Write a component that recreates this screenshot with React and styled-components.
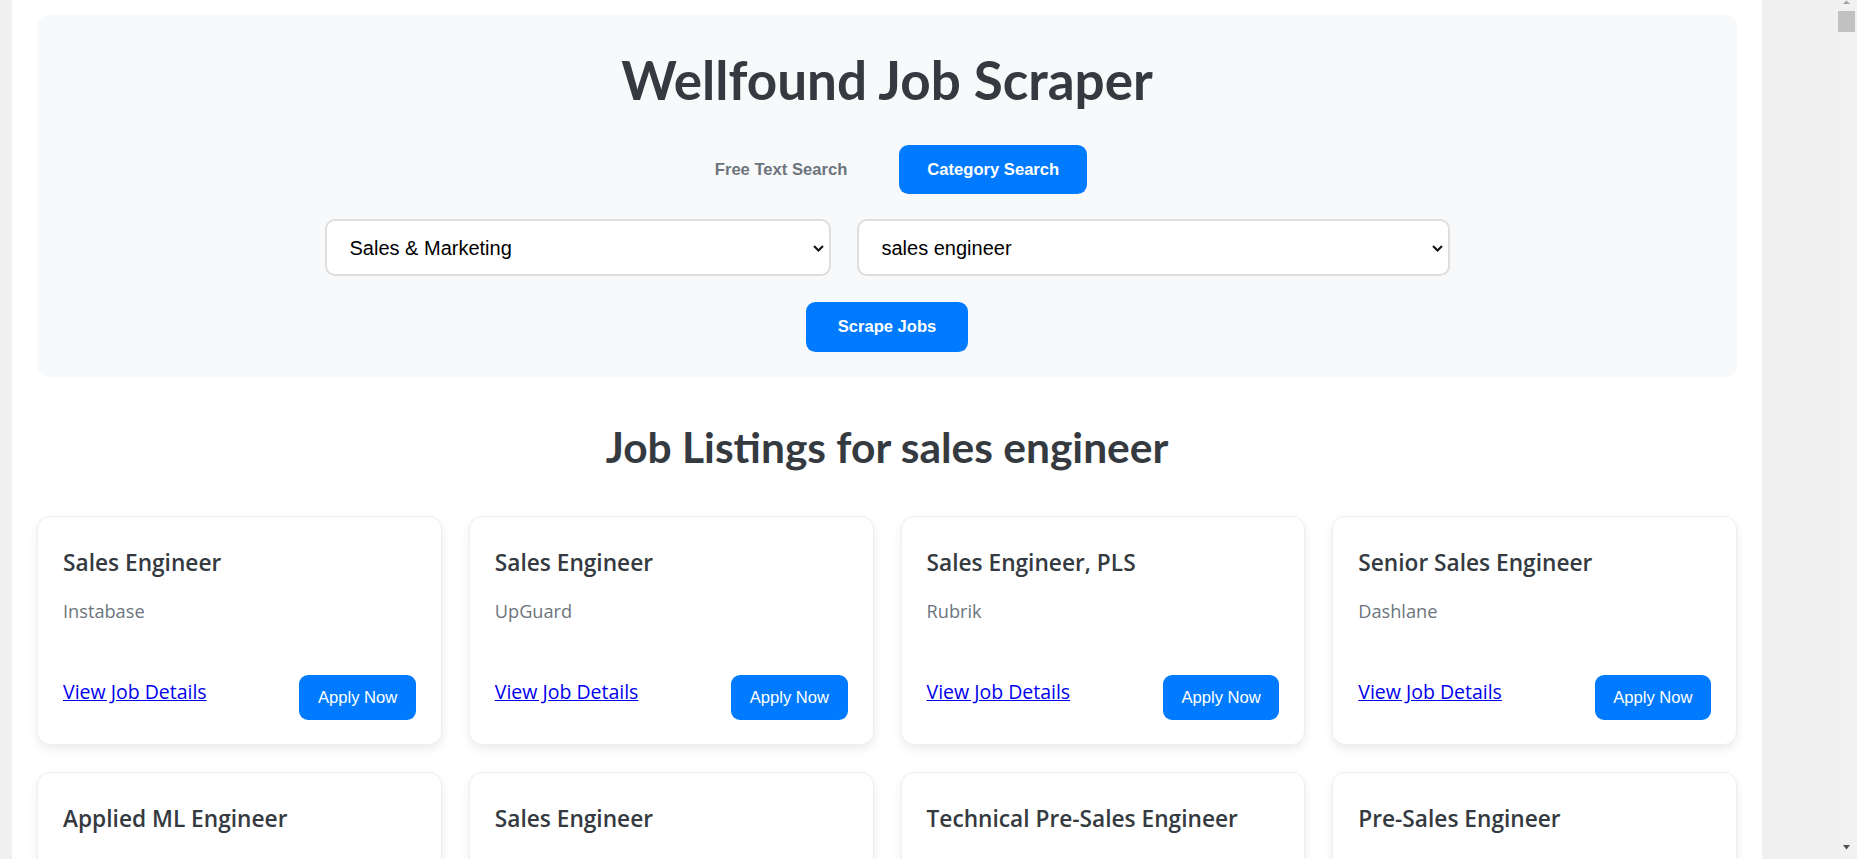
import React from 'react';
import styled, { createGlobalStyle } from 'styled-components';

const GlobalStyle = createGlobalStyle`
  html, body {
    margin: 0;
    padding: 0;
    height: 100%;
    overflow: hidden;
  }
  body {
    background: #f0f0f0;
    font-family: "Open Sans", "Noto Sans", sans-serif;
  }
  * {
    box-sizing: border-box;
  }
`;

const Frame = styled.div`
  display: flex;
  height: 100vh;
`;

const Page = styled.div`
  flex: 1;
  overflow: hidden;
  padding-left: 12px;
  background: #f0f0f0;
`;

const Container = styled.main`
  width: 1750px;
  min-height: 100%;
  background: #fff;
  padding: 15px 25px 0;
`;

const SearchPanel = styled.section`
  background: #f8f9fa;
  border-radius: 12px;
  padding: 25px;
  display: flex;
  flex-direction: column;
  align-items: center;
`;

const Title = styled.h1`
  margin: 14px 0 0;
  font-family: Lato, "Open Sans", sans-serif;
  font-size: 53px;
  line-height: 52px;
  font-weight: 700;
  color: #343a40;
`;

const Tabs = styled.div`
  display: flex;
  gap: 24px;
  margin-top: 39px;
`;

const Tab = styled.button`
  height: 49px;
  padding: 0 28px;
  border: none;
  border-radius: 9.5px;
  font-family: "Liberation Sans", Arial, sans-serif;
  font-size: 16.6px;
  font-weight: 700;
  cursor: pointer;
  background: ${p => (p.$active ? '#007bff' : 'transparent')};
  color: ${p => (p.$active ? '#fff' : '#6c757d')};
`;

const SelectRow = styled.div`
  display: flex;
  gap: 26px;
  margin-top: 25px;
`;

const SelectWrap = styled.div`
  position: relative;
  width: ${p => p.$width}px;
`;

const Select = styled.select`
  appearance: none;
  width: 100%;
  height: 57px;
  padding: 0 40px 0 23px;
  border: 2px solid #dedede;
  border-radius: 10px;
  background: #fff;
  color: #000;
  font-family: "Liberation Sans", Arial, sans-serif;
  font-size: 20px;
  outline: none;
`;

const Chevron = styled.svg`
  position: absolute;
  right: 7px;
  top: 50%;
  margin-top: -3px;
  pointer-events: none;
`;

const PrimaryButton = styled.button`
  height: 50px;
  padding: 0 32px;
  margin-top: 26px;
  border: none;
  border-radius: 9.5px;
  background: #007bff;
  color: #fff;
  font-family: "Liberation Sans", Arial, sans-serif;
  font-size: 16.6px;
  font-weight: 700;
  cursor: pointer;
`;

const SectionTitle = styled.h2`
  margin: 49px 0 48px;
  text-align: center;
  font-family: Lato, "Open Sans", sans-serif;
  font-size: 42.5px;
  line-height: 42px;
  font-weight: 700;
  color: #343a40;
`;

const Grid = styled.div`
  display: grid;
  grid-template-columns: repeat(4, 1fr);
  gap: 27px;
`;

const Card = styled.article`
  display: flex;
  flex-direction: column;
  padding: 25px 25px 24px;
  background: #fff;
  border: 1px solid #eceef0;
  border-radius: 13px;
  box-shadow: 0 4px 10px rgba(0, 0, 0, 0.08);
`;

const JobTitle = styled.h3`
  margin: 6px 0 0;
  font-size: 22.7px;
  line-height: 30px;
  font-weight: 600;
  color: #343a40;
`;

const Company = styled.p`
  margin: 20px 0 0;
  font-size: 18.2px;
  line-height: 26px;
  color: #6c757d;
`;

const CardFooter = styled.div`
  display: flex;
  justify-content: space-between;
  align-items: flex-start;
  margin-top: 51px;
`;

const DetailsLink = styled.a`
  margin-top: 4px;
  font-size: 19.5px;
  line-height: 26px;
  color: #0000ee;
  text-decoration: underline;
`;

const ApplyButton = styled.button`
  height: 45px;
  padding: 0 18.5px;
  border: none;
  border-radius: 9px;
  background: #007bff;
  color: #fff;
  font-family: "Liberation Sans", Arial, sans-serif;
  font-size: 16.6px;
  cursor: pointer;
`;

const ScrollRail = styled.div`
  width: 21px;
  background: #f1f1f1;
  display: flex;
  flex-direction: column;
  align-items: center;
`;

const Thumb = styled.div`
  width: 17px;
  height: 21px;
  margin-top: 7px;
  background: #c1c1c1;
`;

const RailSpacer = styled.div`
  flex: 1;
`;

const jobs = [
  { title: 'Sales Engineer', company: 'Instabase' },
  { title: 'Sales Engineer', company: 'UpGuard' },
  { title: 'Sales Engineer, PLS', company: 'Rubrik' },
  { title: 'Senior Sales Engineer', company: 'Dashlane' },
  { title: 'Applied ML Engineer', company: 'MindsDB' },
  { title: 'Sales Engineer', company: 'Coreweave' },
  { title: 'Technical Pre-Sales Engineer', company: 'SafetyCulture' },
  { title: 'Pre-Sales Engineer', company: 'Cresta' },
  { title: 'Solutions Engineer', company: 'Vercel' },
  { title: 'Sales Engineer', company: 'Retool' },
  { title: 'Senior Solutions Engineer', company: 'Airtable' },
  { title: 'Sales Engineer', company: 'Hex' },
];

export default function App() {
  return (
    <>
      <GlobalStyle />
      <Frame>
        <Page>
          <Container>
            <SearchPanel>
              <Title>Wellfound Job Scraper</Title>
              <Tabs>
                <Tab>Free Text Search</Tab>
                <Tab $active>Category Search</Tab>
              </Tabs>
              <SelectRow>
                <SelectWrap $width={506}>
                  <Select defaultValue="sales">
                    <option value="sales">Sales &amp; Marketing</option>
                    <option value="eng">Engineering</option>
                  </Select>
                  <Chevron width="11" height="7" viewBox="0 0 11 7">
                    <path d="M1 1l4.5 4.5L10 1" fill="none" stroke="#111" strokeWidth="2" />
                  </Chevron>
                </SelectWrap>
                <SelectWrap $width={593}>
                  <Select defaultValue="se">
                    <option value="se">sales engineer</option>
                    <option value="ae">account executive</option>
                  </Select>
                  <Chevron width="11" height="7" viewBox="0 0 11 7">
                    <path d="M1 1l4.5 4.5L10 1" fill="none" stroke="#111" strokeWidth="2" />
                  </Chevron>
                </SelectWrap>
              </SelectRow>
              <PrimaryButton>Scrape Jobs</PrimaryButton>
            </SearchPanel>

            <SectionTitle>Job Listings for sales engineer</SectionTitle>

            <Grid>
              {jobs.map((job, i) => (
                <Card key={i}>
                  <JobTitle>{job.title}</JobTitle>
                  <Company>{job.company}</Company>
                  <CardFooter>
                    <DetailsLink href="#">View Job Details</DetailsLink>
                    <ApplyButton>Apply Now</ApplyButton>
                  </CardFooter>
                </Card>
              ))}
            </Grid>
          </Container>
        </Page>
        <ScrollRail>
          <svg width="9" height="4" viewBox="0 0 9 4">
            <path d="M1 4h7L4.5 0.5z" fill="#a3a3a3" />
          </svg>
          <Thumb />
          <RailSpacer />
          <svg width="9" height="5" viewBox="0 0 9 5" style={{ marginBottom: 9 }}>
            <path d="M1 0h7L4.5 4.5z" fill="#505050" />
          </svg>
        </ScrollRail>
      </Frame>
    </>
  );
}
